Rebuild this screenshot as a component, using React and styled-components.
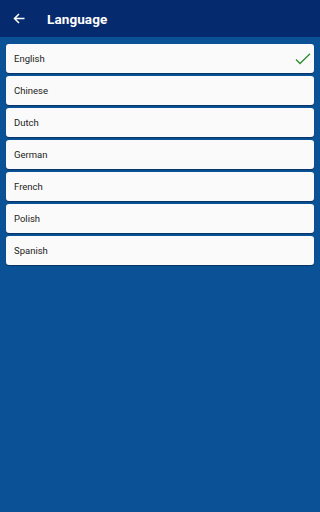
import React from 'react';
import styled, { createGlobalStyle } from 'styled-components';

const GlobalStyle = createGlobalStyle`
    html, body {
        margin: 0;
        padding: 0;
        background: #0a5196;
        font-family: Roboto, "Noto Sans", sans-serif;
    }
`;

const Page = styled.div`
    width: 100%;
    min-height: 100vh;
    background: #0a5196;
    display: flex;
    flex-direction: column;
`;

const Toolbar = styled.header`
    height: 37px;
    background: #062a6e;
    display: flex;
    align-items: center;
    padding-left: 12px;
    box-sizing: border-box;
    color: #ffffff;
`;

const BackButton = styled.button`
    width: 13px;
    height: 13px;
    padding: 0;
    border: 0;
    background: none;
    color: #ffffff;
    display: flex;
    align-items: center;
    justify-content: center;
    margin-right: 22px;
`;

const Title = styled.h1`
    margin: 0;
    font-size: 13.5px;
    font-weight: 700;
    letter-spacing: 0.1px;
`;

const List = styled.ul`
    list-style: none;
    margin: 0;
    padding: 7px 6px 0 6px;
    display: flex;
    flex-direction: column;
    gap: 3px;
`;

const Row = styled.li`
    height: 29px;
    background: #fafafa;
    border-radius: 3px;
    box-shadow: 0 1px 1px rgba(0, 0, 0, 0.35);
    display: flex;
    align-items: center;
    justify-content: space-between;
    padding: 0 3px 0 8px;
    box-sizing: border-box;
    font-size: 9.5px;
    color: #222222;
`;

const languages = ['English', 'Chinese', 'Dutch', 'German', 'French', 'Polish', 'Spanish'];

const App = () => {
    const selected = 'English';

    return (
        <Page>
            <GlobalStyle />
            <Toolbar>
                <BackButton>
                    <svg width="12" height="11" viewBox="0 0 12 11" fill="none" stroke="currentColor" strokeWidth="1.5">
                        <path d="M11.5 5.5H1.5M6 1L1.5 5.5L6 10" />
                    </svg>
                </BackButton>
                <Title>Language</Title>
            </Toolbar>
            <List>
                {languages.map((lang) => (
                    <Row key={lang}>
                        <span>{lang}</span>
                        {lang === selected
                            ? (
                                <svg width="16" height="12" viewBox="0 0 16 12" fill="none" stroke="#2e8b2e" strokeWidth="1.3">
                                    <path d="M1 6.5L5 10.5L15 0.8" />
                                </svg>
                            )
                            : null}
                    </Row>
                ))}
            </List>
        </Page>
    );
};

export default App;
